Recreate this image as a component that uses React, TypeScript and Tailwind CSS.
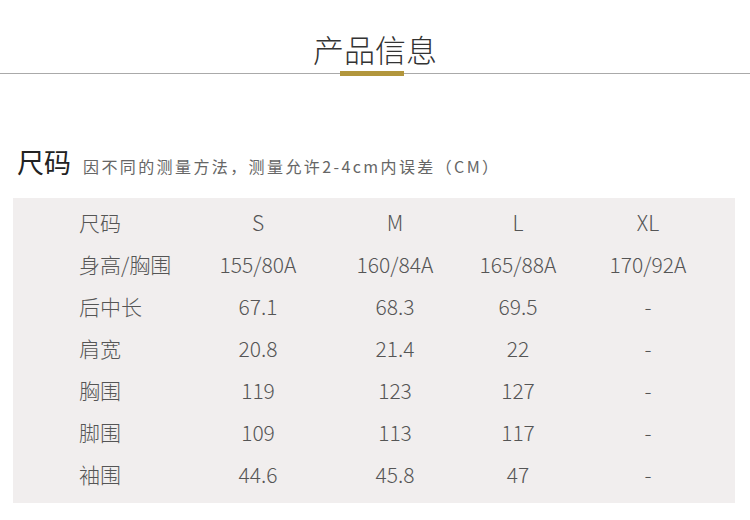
const rows = [
  ['尺码', 'S', 'M', 'L', 'XL'],
  ['身高/胸围', '155/80A', '160/84A', '165/88A', '170/92A'],
  ['后中长', '67.1', '68.3', '69.5', '-'],
  ['肩宽', '20.8', '21.4', '22', '-'],
  ['胸围', '119', '123', '127', '-'],
  ['脚围', '109', '113', '117', '-'],
  ['袖围', '44.6', '45.8', '47', '-'],
];

export default function App() {
  return (
    <div
      className="w-[750px] h-[520px] bg-white text-[#555] overflow-hidden"
      style={{ fontFamily: '"Noto Sans CJK SC", "Noto Sans", sans-serif' }}
    >
      {/* Header */}
      <div className="pt-[28px] text-center text-[31px] leading-[42px] text-[#333] font-light">产品信息</div>
      <div className="mt-[1px] flex items-center h-[5px]">
        <div className="w-[340px] h-px bg-[#aaa]" />
        <div className="w-[64px] h-[5px] bg-[#b2963c]" />
        <div className="flex-1 h-px bg-[#aaa]" />
      </div>

      {/* Size title */}
      <div className="mt-[68px] pl-[17px] flex items-baseline">
        <span className="text-[27px] leading-[36px] text-[#222]">尺码</span>
        <span className="ml-[12px] text-[16px] tracking-[2.4px] text-[#666]">
          因不同的测量方法，测量允许2-4cm内误差（CM）
        </span>
      </div>

      {/* Table */}
      <div className="mt-[18px] mx-[13px] w-[722px] bg-[#f1eeee] pt-[4px] pb-[7px] pl-[66px]">
        {rows.map((r) => (
          <div
            key={r[0]}
            className="grid grid-cols-[119px_120px_154px_92px_168px] h-[42px] items-center text-[21px] font-light"
          >
            <div>{r[0]}</div>
            <div className="text-center">{r[1]}</div>
            <div className="text-center">{r[2]}</div>
            <div className="text-center">{r[3]}</div>
            <div className="text-center">{r[4]}</div>
          </div>
        ))}
      </div>
    </div>
  );
}
